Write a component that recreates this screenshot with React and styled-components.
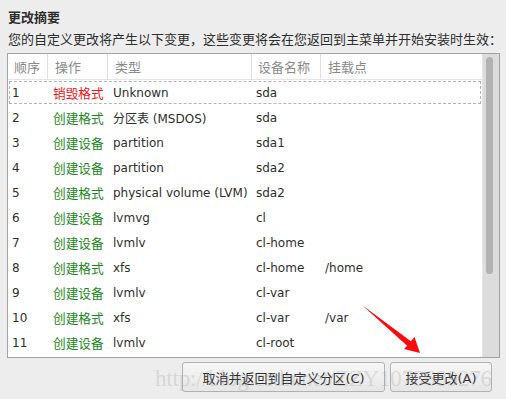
import React from "react";
import styled, { createGlobalStyle } from "styled-components";

const GlobalStyle = createGlobalStyle`
  html, body {
    margin: 0;
    padding: 0;
    background: #ededed;
  }
  body {
    font-family: "DejaVu Sans", "Noto Sans CJK SC", sans-serif;
    color: #2e2e2e;
  }
`;

const Page = styled.div`
  position: relative;
  width: 506px;
  height: 399px;
  box-sizing: border-box;
  padding: 9px 6px 0 7px;
  overflow: hidden;
`;

const Title = styled.div`
  font-size: 13px;
  font-weight: bold;
  line-height: 17px;
  padding-left: 1px;
`;

const Subtitle = styled.div`
  font-size: 13px;
  line-height: 17px;
  margin-top: 5px;
  padding-left: 1px;
  white-space: nowrap;
`;

const Frame = styled.div`
  margin-top: 5px;
  height: 305px;
  box-sizing: border-box;
  border: 1px solid #a2a2a2;
  display: flex;
  background: #fff;
`;

const List = styled.div`
  flex: 1;
  display: flex;
  flex-direction: column;
`;

const Grid = styled.div`
  display: grid;
  grid-template-columns: 40px 60px 144px 69px 1fr;
  height: 25px;
  align-items: center;
`;

const HeadRow = styled(Grid)`
  border-bottom: 1px solid #e4e4e4;
`;

const HeadCell = styled.div`
  height: 100%;
  display: flex;
  align-items: center;
  padding-left: ${(p) => p.$pad}px;
  font-size: 13px;
  color: #8a8a8a;
  border-right: ${(p) => (p.$last ? "none" : "1px solid #e0e0e0")};
  white-space: nowrap;
`;

const Row = styled(Grid)`
  outline: ${(p) => (p.$focus ? "1px dashed #b4b4b4" : "none")};
  outline-offset: -2px;
`;

const Cell = styled.div`
  padding-left: ${(p) => p.$pad}px;
  font-size: 12px;
  white-space: nowrap;
`;

const OpCell = styled.div`
  padding-left: 5px;
  font-size: 12.7px;
  white-space: nowrap;
  color: ${(p) => (p.$danger ? "#f01414" : "#198a19")};
`;

const Trough = styled.div`
  width: 12px;
  background: #dcdcdc;
  border-left: 1px solid #e6e6e6;
  padding: 3px 2px 0 2px;
`;

const Thumb = styled.div`
  height: 217px;
  margin-left: 1px;
  width: 7px;
  border-radius: 4px;
  background: #b2b2b2;
`;

const Buttons = styled.div`
  display: flex;
  justify-content: flex-end;
  gap: 5px;
  margin-top: 4px;
  padding-right: 8px;
`;

const Button = styled.div`
  width: ${(p) => p.$w}px;
  height: 30px;
  box-sizing: border-box;
  border: 1px solid #b2b2b2;
  border-radius: 3px;
  background: linear-gradient(#f7f7f7, #e6e6e6);
  display: flex;
  align-items: center;
  justify-content: center;
  font-size: 13px;
  color: #2e2e2e;
  white-space: nowrap;
`;

const Watermark = styled.div`
  position: absolute;
  left: 155px;
  top: 366px;
  font-family: "Liberation Serif", serif;
  font-size: 23px;
  letter-spacing: -0.2px;
  color: rgba(160, 160, 160, 0.3);
  pointer-events: none;
  white-space: nowrap;
`;

const Arrow = styled.svg`
  position: absolute;
  left: 355px;
  top: 300px;
`;

const rows = [
  ["1", "销毁格式", "Unknown", "sda", ""],
  ["2", "创建格式", "分区表 (MSDOS)", "sda", ""],
  ["3", "创建设备", "partition", "sda1", ""],
  ["4", "创建设备", "partition", "sda2", ""],
  ["5", "创建格式", "physical volume (LVM)", "sda2", ""],
  ["6", "创建设备", "lvmvg", "cl", ""],
  ["7", "创建设备", "lvmlv", "cl-home", ""],
  ["8", "创建格式", "xfs", "cl-home", "/home"],
  ["9", "创建设备", "lvmlv", "cl-var", ""],
  ["10", "创建格式", "xfs", "cl-var", "/var"],
  ["11", "创建设备", "lvmlv", "cl-root", ""],
];

export default function App() {
  return (
    <Page>
      <GlobalStyle />
      <Title>更改摘要</Title>
      <Subtitle>
        您的自定义更改将产生以下变更，这些变更将会在您返回到主菜单并开始安装时生效：
      </Subtitle>
      <Frame>
        <List>
          <HeadRow>
            <HeadCell $pad={6}>顺序</HeadCell>
            <HeadCell $pad={7}>操作</HeadCell>
            <HeadCell $pad={7}>类型</HeadCell>
            <HeadCell $pad={6}>设备名称</HeadCell>
            <HeadCell $pad={7} $last>
              挂载点
            </HeadCell>
          </HeadRow>
          {rows.map((r, i) => (
            <Row key={r[0]} $focus={i === 0}>
              <Cell $pad={4}>{r[0]}</Cell>
              <OpCell $danger={r[1] === "销毁格式"}>{r[1]}</OpCell>
              <Cell $pad={5}>{r[2]}</Cell>
              <Cell $pad={4}>{r[3]}</Cell>
              <Cell $pad={4}>{r[4]}</Cell>
            </Row>
          ))}
        </List>
        <Trough>
          <Thumb />
        </Trough>
      </Frame>
      <Buttons>
        <Button $w={203}>取消并返回到自定义分区(C)</Button>
        <Button $w={102}>接受更改(A)</Button>
      </Buttons>
      <Watermark>http://blog.csdn.net/ZZY1078689276</Watermark>
      <Arrow width="70" height="60" viewBox="0 0 70 60">
        <polygon
          points="7,5 55.9,41.2 59.5,37 65,53 49,49 52.1,45.8"
          fill="#ff0a0a"
        />
      </Arrow>
    </Page>
  );
}
